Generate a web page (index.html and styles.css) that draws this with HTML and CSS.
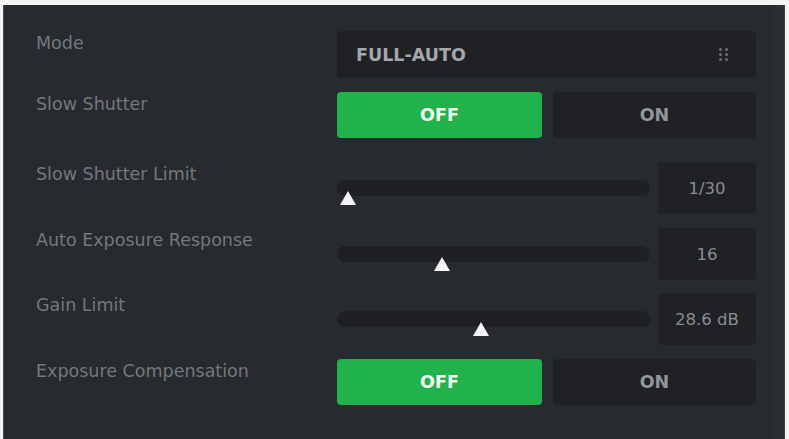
FILE: index.html
```html
<!DOCTYPE html>
<html>
<head>
<meta charset="utf-8">
<link rel="stylesheet" href="styles.css">
</head>
<body>
<div class="panel">
  <div class="row r1">
    <div class="label">Mode</div>
    <div class="select">
      <span class="select-text">FULL-AUTO</span>
      <span class="grip"><i></i><i></i><i></i><i></i><i></i><i></i></span>
    </div>
  </div>
  <div class="row r2">
    <div class="label">Slow Shutter</div>
    <div class="toggle">
      <div class="btn on">OFF</div>
      <div class="btn">ON</div>
    </div>
  </div>
  <div class="row r3">
    <div class="label">Slow Shutter Limit</div>
    <div class="slider">
      <div class="track"><span class="thumb" style="left: 3.5%"></span></div>
      <div class="value">1/30</div>
    </div>
  </div>
  <div class="row r4">
    <div class="label">Auto Exposure Response</div>
    <div class="slider">
      <div class="track"><span class="thumb" style="left: 33.5%"></span></div>
      <div class="value">16</div>
    </div>
  </div>
  <div class="row r5">
    <div class="label">Gain Limit</div>
    <div class="slider">
      <div class="track"><span class="thumb" style="left: 46%"></span></div>
      <div class="value">28.6 dB</div>
    </div>
  </div>
  <div class="row r6">
    <div class="label">Exposure Compensation</div>
    <div class="toggle">
      <div class="btn on">OFF</div>
      <div class="btn">ON</div>
    </div>
  </div>
</div>
</body>
</html>
```
FILE: styles.css
```css
html, body {
  margin: 0;
  padding: 0;
  background: #f4f4f4;
}
body {
  padding: 5px 0 0 3px;
  height: 434px;
  overflow: hidden;
  font-family: "DejaVu Sans", "Noto Sans", sans-serif;
}
.panel {
  width: 782px;
  height: 434px;
  box-sizing: border-box;
  background: #272a2e;
  border-left: 1px solid #4a4c50;
  border-right: 1px solid #3a3d41;
  padding: 26px 0 0 32px;
  box-shadow: inset -11px 0 0 #2b2e32;
}
.row {
  display: grid;
  grid-template-columns: 301px 419px;
  align-items: start;
}
.r2 { margin-top: 14px; }
.r3 { margin-top: 24px; }
.r4 { margin-top: 14px; }
.r5 { margin-top: 13px; }
.r6 { margin-top: 14px; }
.label {
  color: #75787c;
  font-size: 17.5px;
  line-height: 24px;
  white-space: nowrap;
}
.select {
  height: 47px;
  background: #1f2124;
  border-radius: 4px;
  display: flex;
  align-items: center;
  justify-content: space-between;
  padding: 0 28px 0 19px;
}
.select-text {
  color: #a4a7ab;
  font-weight: 700;
  font-size: 17.5px;
}
.grip {
  display: grid;
  grid-template-columns: 3px 3px;
  grid-template-rows: 3px 3px 3px;
  gap: 2px 3px;
}
.grip i {
  display: block;
  width: 3px;
  height: 3px;
  border-radius: 50%;
  background: #6c6f74;
}
.toggle {
  display: grid;
  grid-template-columns: 205px 203px;
  gap: 11px;
}
.btn {
  height: 46px;
  border-radius: 4px;
  background: #1f2124;
  color: #929599;
  font-weight: 700;
  font-size: 17.5px;
  display: flex;
  align-items: center;
  justify-content: center;
}
.btn.on {
  background: #22b24c;
  color: #f2fff4;
}
.slider {
  display: flex;
  align-items: flex-start;
  gap: 8px;
}
.track {
  position: relative;
  width: 313px;
  height: 16px;
  margin-top: 18px;
  border-radius: 8px;
  background: #1e2023;
}
.thumb {
  position: absolute;
  top: 11px;
  width: 0;
  height: 0;
  margin-left: -8px;
  border-left: 8px solid transparent;
  border-right: 8px solid transparent;
  border-bottom: 14px solid #f4f4f4;
}
.value {
  width: 98px;
  height: 52px;
  border-radius: 4px;
  background: #1f2124;
  color: #8a8d91;
  font-size: 16.5px;
  display: flex;
  align-items: center;
  justify-content: center;
}
```
